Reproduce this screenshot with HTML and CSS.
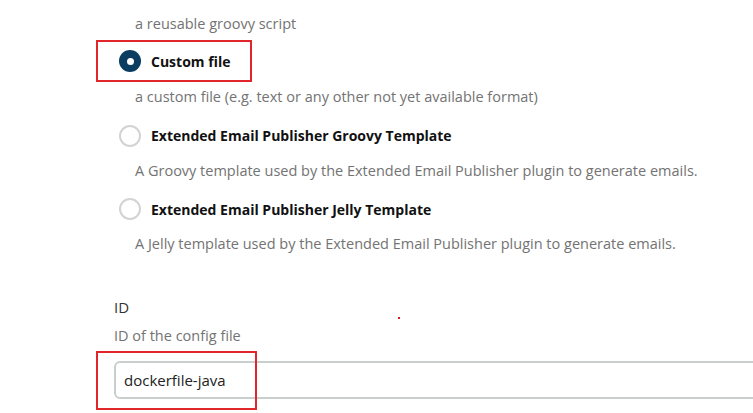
FILE: index.html
```html
<!DOCTYPE html>
<html>
<head>
<meta charset="utf-8">
<link rel="stylesheet" href="styles.css">
</head>
<body>
<div class="page">
  <div class="options">
    <p class="desc first">a reusable groovy script</p>
    <label class="option highlight">
      <span class="radio checked"></span>
      <span class="option-title">Custom file</span>
    </label>
    <p class="desc after-highlight">a custom file (e.g. text or any other not yet available format)</p>
    <label class="option">
      <span class="radio"></span>
      <span class="option-title">Extended Email Publisher Groovy Template</span>
    </label>
    <p class="desc">A Groovy template used by the Extended Email Publisher plugin to generate emails.</p>
    <label class="option">
      <span class="radio"></span>
      <span class="option-title">Extended Email Publisher Jelly Template</span>
    </label>
    <p class="desc">A Jelly template used by the Extended Email Publisher plugin to generate emails.</p>
  </div>
  <div class="field">
    <div class="field-label">ID</div>
    <div class="field-desc">ID of the config file</div>
    <div class="input-wrap">
      <input class="text-input" type="text" value="dockerfile-java">
      <span class="annotation"></span>
    </div>
    <span class="red-dot"></span>
  </div>
</div>
</body>
</html>
```
FILE: styles.css
```css
html, body {
  margin: 0;
  padding: 0;
  background: #ffffff;
  overflow: hidden;
}
body {
  width: 753px;
  height: 413px;
  font-family: "Open Sans", "Noto Sans", sans-serif;
  font-size: 14px;
  color: #222;
}
.page {
  padding-top: 14px;
}
.options {
  display: flex;
  flex-direction: column;
  align-items: flex-start;
  padding-left: 96px;
}
.desc {
  margin: 4px 0 0 39px;
  height: 20px;
  line-height: 20px;
  color: #737373;
  font-size: 14.5px;
  white-space: nowrap;
}
.desc.first {
  margin-top: 0;
}
.desc.after-highlight {
  margin-top: 5px;
}
.option {
  display: flex;
  align-items: center;
  gap: 10px;
  height: 38px;
  padding: 0 20px 0 21px;
  border: 2px solid transparent;
  margin-top: 7.5px;
}
.option.highlight {
  border-color: #e0262a;
  margin-top: 6px;
}
.radio {
  width: 22px;
  height: 22px;
  box-sizing: border-box;
  border-radius: 50%;
  border: 2px solid #d3d3d3;
  background: #fff;
  display: flex;
  align-items: center;
  justify-content: center;
  flex: none;
}
.radio.checked {
  border: none;
  background: #0b3d60;
}
.radio.checked::after {
  content: "";
  width: 7px;
  height: 7px;
  border-radius: 50%;
  background: #fff;
}
.option-title {
  font-weight: 700;
  color: #111;
  font-size: 14px;
  white-space: nowrap;
}
.field {
  position: relative;
  padding-left: 114px;
  margin-top: 43px;
}
.field-label {
  height: 20px;
  line-height: 20px;
  font-size: 15px;
  color: #333;
}
.field-desc {
  margin-top: 9px;
  height: 20px;
  line-height: 20px;
  font-size: 14.5px;
  color: #737373;
}
.input-wrap {
  position: relative;
  margin-top: 15px;
}
.text-input {
  display: block;
  width: 700px;
  height: 38px;
  box-sizing: border-box;
  border: 2px solid #c9cece;
  border-radius: 6px;
  padding: 0 8px;
  font-family: "Open Sans", "Noto Sans", sans-serif;
  font-size: 15px;
  color: #222;
  background: #fff;
}
.annotation {
  position: absolute;
  left: -18px;
  top: -10px;
  width: 161px;
  height: 59px;
  box-sizing: border-box;
  border: 2px solid #e0262a;
}
.red-dot {
  position: absolute;
  left: 398px;
  top: 20px;
  width: 2px;
  height: 2px;
  background: #d02020;
}
```
